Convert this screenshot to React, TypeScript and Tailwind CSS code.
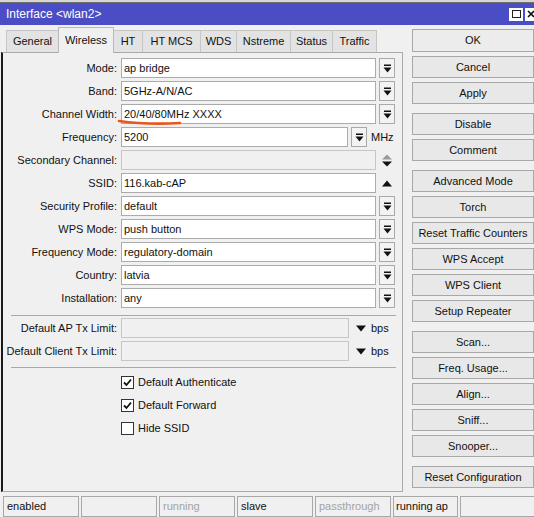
import React from "react";

const tabs = ["General", "Wireless", "HT", "HT MCS", "WDS", "Nstreme", "Status", "Traffic"];
const tabWidths: Record<string, string> = {
  General: "w-[53px]",
  Wireless: "w-[56px]",
  HT: "w-[30px]",
  "HT MCS": "w-[59px]",
  WDS: "w-[37px]",
  Nstreme: "w-[55px]",
  Status: "w-[43px]",
  Traffic: "w-[45px]",
};

function DropIcon() {
  return (
    <svg width="9" height="9" viewBox="0 0 9 9">
      <rect x="1" y="0.5" width="7" height="1.5" fill="#111" />
      <polygon points="0.5,3.5 8.5,3.5 4.5,8.5" fill="#111" />
    </svg>
  );
}

function ArrowBtn() {
  return (
    <div className="w-[16px] h-[20px] ml-[3px] border border-[#a9a9a9] bg-[#f3f3f3] flex items-center justify-center">
      <DropIcon />
    </div>
  );
}

function Field({ value, w = "w-[255px]", disabled }: { value?: string; w?: string; disabled?: boolean }) {
  return (
    <div
      className={`${w} h-[20px] border pl-[2px] leading-[18px] whitespace-nowrap overflow-hidden ${
        disabled ? "bg-[#f0f0f0] border-[#c6c6c6]" : "bg-white border-[#ababab]"
      }`}
    >
      {value}
    </div>
  );
}

function Row({ label, children }: { label: string; children: React.ReactNode }) {
  return (
    <div className="flex items-center h-[20px] mb-[3px]">
      <div className="w-[114px] text-right whitespace-nowrap">{label}</div>
      <div className="ml-[4px] flex items-center">{children}</div>
    </div>
  );
}

function Check({ label, checked }: { label: string; checked?: boolean }) {
  return (
    <div className="flex items-center h-[20px] mb-[3px] pl-[118px]">
      <div className="w-[13px] h-[13px] border border-[#333] bg-white flex items-center justify-center">
        {checked && (
          <svg width="9" height="9" viewBox="0 0 9 9">
            <path d="M1 4.5 L3.5 7 L8 1.5" stroke="#111" strokeWidth="1.8" fill="none" />
          </svg>
        )}
      </div>
      <span className="ml-[4px]">{label}</span>
    </div>
  );
}

function Btn({ label, className = "" }: { label: string; className?: string }) {
  return (
    <div
      className={`w-[122px] h-[22px] border border-[#a8a8a8] bg-[#e8e8e8] flex items-center justify-center whitespace-nowrap ${className}`}
    >
      {label}
    </div>
  );
}

export default function App() {
  return (
    <div className="relative w-[534px] h-[517px] overflow-hidden bg-[#f0f0f0] text-[11px] text-[#111] font-['Liberation_Sans',Arial,sans-serif] flex flex-col">
      <div className="h-[3px] bg-[#d6d6d6] border-b border-[#707070]" />

      {/* title bar */}
      <div className="h-[22px] bg-[#4b4dc4] flex items-center pl-[6px] text-white text-[12px]">
        <span>{"Interface <wlan2>"}</span>
        <div className="ml-auto flex items-center gap-[2px] mr-[-3px]">
          <div className="w-[14px] h-[13px] bg-white flex items-center justify-center">
            <div className="w-[9px] h-[8px] border border-[#222]" />
          </div>
          <div className="w-[12px] h-[13px] bg-white flex items-center justify-center">
            <svg width="8" height="8" viewBox="0 0 8 8">
              <path d="M1 1 L7 7 M7 1 L1 7" stroke="#111" strokeWidth="1.6" />
            </svg>
          </div>
        </div>
      </div>

      <div className="flex h-[469px]">
        {/* left side */}
        <div className="w-[404px] flex flex-col pl-[1px]">
          <div className="flex items-end h-[27px] pl-[6px] pt-[2px]">
            {tabs.map((t) =>
              t === "Wireless" ? (
                <div
                  key={t}
                  className={`${tabWidths[t]} h-[26px] -mb-px relative z-10 bg-[#f0f0f0] border border-[#b9b9b9] border-b-0 -ml-px flex items-start justify-center pt-[4px]`}
                >
                  {t}
                </div>
              ) : (
                <div
                  key={t}
                  className={`${tabWidths[t]} h-[22px] bg-[#e3e3e3] border border-[#c6c6c6] border-b-0 -ml-px flex items-center justify-center`}
                >
                  {t}
                </div>
              )
            )}
          </div>

          <div className="relative h-[440px] flex flex-col border border-[#a9a9a9] border-l-2 border-l-[#1a1a1a] pt-[5px]">
            <Row label="Mode:">
              <Field value="ap bridge" />
              <ArrowBtn />
            </Row>
            <Row label="Band:">
              <Field value="5GHz-A/N/AC" />
              <ArrowBtn />
            </Row>
            <Row label="Channel Width:">
              <Field value="20/40/80MHz XXXX" />
              <ArrowBtn />
            </Row>
            <Row label="Frequency:">
              <Field value="5200" w="w-[227px]" />
              <ArrowBtn />
              <span className="ml-[4px]">MHz</span>
            </Row>
            <Row label="Secondary Channel:">
              <Field disabled />
              <svg className="ml-[6px]" width="10" height="13" viewBox="0 0 10 13">
                <polygon points="0,5.5 10,5.5 5,0.5" fill="#9a9a9a" />
                <polygon points="0,7.5 10,7.5 5,12.5" fill="#111" />
              </svg>
            </Row>
            <Row label="SSID:">
              <Field value="116.kab-cAP" />
              <svg className="ml-[6px]" width="10" height="7" viewBox="0 0 10 7">
                <polygon points="0,6.5 10,6.5 5,0.5" fill="#111" />
              </svg>
            </Row>
            <Row label="Security Profile:">
              <Field value="default" />
              <ArrowBtn />
            </Row>
            <Row label="WPS Mode:">
              <Field value="push button" />
              <ArrowBtn />
            </Row>
            <Row label="Frequency Mode:">
              <Field value="regulatory-domain" />
              <ArrowBtn />
            </Row>
            <Row label="Country:">
              <Field value="latvia" />
              <ArrowBtn />
            </Row>
            <Row label="Installation:">
              <Field value="any" />
              <ArrowBtn />
            </Row>

            <div className="mt-[4px] ml-[8px] w-[385px] h-px bg-[#a8a8a8]" />

            <div className="mt-[2px] flex flex-col">
              <Row label="Default AP Tx Limit:">
                <Field disabled w="w-[228px]" />
                <svg className="ml-[7px]" width="10" height="7" viewBox="0 0 10 7">
                  <polygon points="0,0.5 10,0.5 5,6.5" fill="#111" />
                </svg>
                <span className="ml-[5px]">bps</span>
              </Row>
              <Row label="Default Client Tx Limit:">
                <Field disabled w="w-[228px]" />
                <svg className="ml-[7px]" width="10" height="7" viewBox="0 0 10 7">
                  <polygon points="0,0.5 10,0.5 5,6.5" fill="#111" />
                </svg>
                <span className="ml-[5px]">bps</span>
              </Row>
            </div>

            <div className="mt-[3px] ml-[8px] w-[385px] h-px bg-[#a8a8a8]" />

            <div className="mt-[4px] flex flex-col">
              <Check label="Default Authenticate" checked />
              <Check label="Default Forward" checked />
              <Check label="Hide SSID" />
            </div>
          </div>
        </div>

        {/* buttons */}
        <div className="flex flex-col pl-[9px] pt-[4px]">
          <Btn label="OK" className="h-[23px] border-[#222] bg-[#ececec]" />
          <Btn label="Cancel" className="mt-[4px]" />
          <Btn label="Apply" className="mt-[4px]" />
          <Btn label="Disable" className="mt-[9px]" />
          <Btn label="Comment" className="mt-[4px]" />
          <Btn label="Advanced Mode" className="mt-[9px]" />
          <Btn label="Torch" className="mt-[4px]" />
          <Btn label="Reset Traffic Counters" className="mt-[4px]" />
          <Btn label="WPS Accept" className="mt-[4px]" />
          <Btn label="WPS Client" className="mt-[4px]" />
          <Btn label="Setup Repeater" className="mt-[4px]" />
          <Btn label="Scan..." className="mt-[9px]" />
          <Btn label="Freq. Usage..." className="mt-[4px]" />
          <Btn label="Align..." className="mt-[4px]" />
          <Btn label="Sniff..." className="mt-[4px]" />
          <Btn label="Snooper..." className="mt-[4px]" />
          <Btn label="Reset Configuration" className="mt-[9px]" />
        </div>
      </div>

      {/* status bar */}
      <div className="flex gap-[2px] pl-[3px] pt-[2px] h-[23px]">
        <div className="w-[76px] border border-[#a8a8a8] pl-[3px] leading-[19px]">enabled</div>
        <div className="w-[76px] border border-[#a8a8a8]" />
        <div className="w-[76px] border border-[#a8a8a8] pl-[3px] leading-[19px] text-[#a3a3a3]">running</div>
        <div className="w-[76px] border border-[#a8a8a8] pl-[3px] leading-[19px]">slave</div>
        <div className="w-[76px] border border-[#a8a8a8] pl-[3px] leading-[19px] text-[#a3a3a3]">passthrough</div>
        <div className="w-[65px] border border-[#a8a8a8] pl-[2px] leading-[19px] whitespace-nowrap">running ap</div>
        <div className="flex-1 border border-[#a8a8a8] border-r-0" />
      </div>

      {/* hand-drawn annotation under channel width */}
      <svg className="absolute left-[117px] top-[119px]" width="66" height="8" viewBox="0 0 66 8">
        <path d="M2 2 C 20 4.5, 45 5, 63 4" stroke="#e8561c" strokeWidth="2.6" fill="none" strokeLinecap="round" />
      </svg>
    </div>
  );
}
